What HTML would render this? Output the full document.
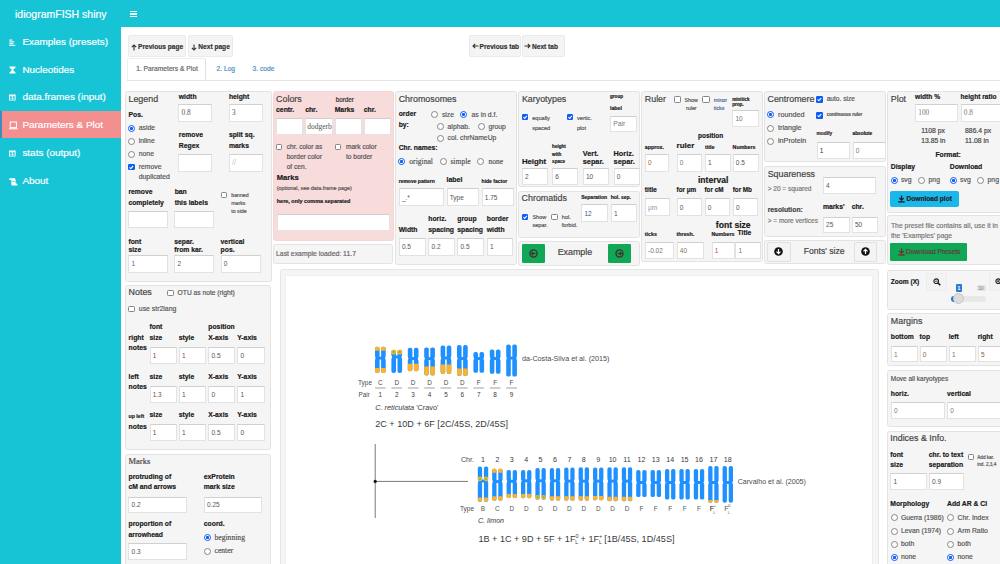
<!DOCTYPE html>
<html><head><meta charset="utf-8"><style>
body{margin:0;width:1000px;height:564px;overflow:hidden;position:relative;background:#fff;font-family:"Liberation Sans",sans-serif}
body>div,body>svg{position:absolute}
.t{position:absolute;height:0;line-height:0;white-space:nowrap;color:#333;-webkit-text-stroke:0.18px currentColor}
.pn{position:absolute;box-sizing:border-box;border:1px solid}
.in{position:absolute;box-sizing:border-box;background:#fff;border:1px solid #e2e2e2;border-top-color:#d0d0d0}
.rd{position:absolute;box-sizing:border-box;border-radius:50%;border:0.9px solid #858585;background:#fff}
.rc{border:1px solid #0c5cf5;background:radial-gradient(circle,#0c5cf5 0,#0c5cf5 38%,#fff 46%)}
.cb{position:absolute;box-sizing:border-box;border:0.9px solid #858585;background:#fff;border-radius:1.3px}
.cc{background:#0c5cf5;border:none}
</style></head><body>
<div style="left:0px;top:0px;width:1000px;height:27px;background:#17c4d6"></div>
<div style="left:0px;top:27px;width:121.3px;height:537px;background:#17c4d6"></div>
<div class="t" style="left:15px;top:14.06px;font-size:10.5px;color:#fff;">idiogramFISH shiny</div>
<div style="left:130.2px;top:10.9px;width:6.6px;height:1.4px;background:#fff"></div>
<div style="left:130.2px;top:13.3px;width:6.6px;height:1.4px;background:#fff"></div>
<div style="left:130.2px;top:15.7px;width:6.6px;height:1.4px;background:#fff"></div>
<div style="left:0px;top:110.6px;width:121.3px;height:27.4px;background:#f48f8f"></div>
<div style="left:0px;top:110.6px;width:1.6px;height:27.4px;background:#3c8dbc"></div>
<div class="t" style="left:22.4px;top:41.95px;font-size:9.95px;color:#fff;">Examples (presets)</div>
<div class="t" style="left:22.4px;top:69.55px;font-size:9.95px;color:#fff;">Nucleotides</div>
<div class="t" style="left:22.4px;top:96.85px;font-size:9.95px;color:#fff;">data.frames (input)</div>
<div class="t" style="left:22.4px;top:125.05px;font-size:9.95px;color:#fff;">Parameters &amp; Plot</div>
<div class="t" style="left:22.4px;top:153.35px;font-size:9.95px;color:#fff;">stats (output)</div>
<div class="t" style="left:22.4px;top:180.95px;font-size:9.95px;color:#fff;">About</div>
<svg style="left:9.4px;top:39.2px" width="8" height="7" viewBox="0 0 8 7"><rect x="0.3" y="0.5" width="3" height="1.1" fill="#fff"/><rect x="0.3" y="2.3" width="5" height="1.1" fill="#fff"/><rect x="0.3" y="4.1" width="4" height="1.1" fill="#fff"/><rect x="0.3" y="5.8" width="6" height="1.1" fill="#fff"/></svg>
<svg style="left:9.2px;top:66.4px" width="7" height="8" viewBox="0 0 7 8"><path d="M0.5 0.5H6.5V1.5L4 4L6.5 6.5V7.5H0.5V6.5L3 4L0.5 1.5Z" fill="#fff"/></svg>
<svg style="left:9.1px;top:94.2px" width="7" height="7" viewBox="0 0 7 7"><rect x="0" y="0.5" width="6.6" height="6" fill="#fff"/><rect x="0.9" y="2.3" width="2" height="1.6" fill="#17c4d6"/><rect x="3.7" y="2.3" width="2" height="1.6" fill="#17c4d6"/><rect x="0.9" y="4.4" width="2" height="1.4" fill="#17c4d6"/><rect x="3.7" y="4.4" width="2" height="1.4" fill="#17c4d6"/></svg>
<svg style="left:9.1px;top:149.8px" width="7" height="7" viewBox="0 0 7 7"><rect x="0" y="0.5" width="6.6" height="6" fill="#fff"/><rect x="0.9" y="2.3" width="2" height="1.6" fill="#17c4d6"/><rect x="3.7" y="2.3" width="2" height="1.6" fill="#17c4d6"/><rect x="0.9" y="4.4" width="2" height="1.4" fill="#17c4d6"/><rect x="3.7" y="4.4" width="2" height="1.4" fill="#17c4d6"/></svg>
<svg style="left:9px;top:120.5px" width="9" height="9" viewBox="0 0 9 9"><rect x="1.2" y="1" width="6.2" height="5.6" fill="none" stroke="#fff" stroke-width="1"/><rect x="0" y="7.2" width="8.6" height="1.1" fill="#fff"/></svg>
<svg style="left:9.4px;top:178.2px" width="9" height="8" viewBox="0 0 9 8"><circle cx="1.1" cy="1.2" r="1" fill="#fff"/><rect x="1.1" y="0.2" width="5" height="1.7" fill="#fff"/><rect x="2.4" y="1.5" width="4.2" height="4.6" fill="#fff"/><rect x="2.4" y="5.4" width="6" height="2.2" rx="0.9" fill="#fff"/><rect x="3.2" y="3" width="2.6" height="0.6" fill="#17c4d6"/></svg>
<div style="left:127.8px;top:35.2px;width:58.6px;height:22px;background:#f4f4f4;border:1px solid #eaeaea;box-sizing:border-box;border-radius:2px"></div>
<div style="left:188.4px;top:35.2px;width:45px;height:22px;background:#f4f4f4;border:1px solid #eaeaea;box-sizing:border-box;border-radius:2px"></div>
<div class="t" style="left:138px;top:47.01px;font-size:6.6px;font-weight:700;">Previous page</div>
<div class="t" style="left:198.3px;top:47.01px;font-size:6.6px;font-weight:700;">Next page</div>
<svg style="left:130.5px;top:43.5px" width="6" height="7" viewBox="0 0 6 7"><path d="M3 6.5V1M0.8 3.2L3 1L5.2 3.2" fill="none" stroke="#333" stroke-width="1.1"/></svg>
<svg style="left:191px;top:43.5px" width="6" height="7" viewBox="0 0 6 7"><path d="M3 0.5V6M0.8 3.8L3 6L5.2 3.8" fill="none" stroke="#333" stroke-width="1.1"/></svg>
<div style="left:468.5px;top:35.2px;width:52px;height:22px;background:#f4f4f4;border:1px solid #eaeaea;box-sizing:border-box;border-radius:2px"></div>
<div style="left:521.5px;top:35.2px;width:43px;height:22px;background:#f4f4f4;border:1px solid #eaeaea;box-sizing:border-box;border-radius:2px"></div>
<div class="t" style="left:479.5px;top:47.01px;font-size:6.6px;font-weight:700;">Previous tab</div>
<div class="t" style="left:532px;top:47.01px;font-size:6.6px;font-weight:700;">Next tab</div>
<svg style="left:471.5px;top:43.3px" width="7" height="6" viewBox="0 0 7 6"><path d="M6.5 3H1M3.2 0.8L1 3L3.2 5.2" fill="none" stroke="#333" stroke-width="1.1"/></svg>
<svg style="left:523.8px;top:43.3px" width="7" height="6" viewBox="0 0 7 6"><path d="M0.5 3H6M3.8 0.8L6 3L3.8 5.2" fill="none" stroke="#333" stroke-width="1.1"/></svg>
<div style="left:127.4px;top:79.6px;width:872.6px;height:0.8px;background:#e6e6e6"></div>
<div style="left:127.4px;top:57.6px;width:78.6px;height:22.9px;background:#fff;border:1px solid #eee;border-right-color:#e0e0e0;border-bottom:none;box-sizing:border-box;border-radius:2px 2px 0 0"></div>
<div class="t" style="left:136.2px;top:68.98px;font-size:6.7px;color:#666;">1. Parameters &amp; Plot</div>
<div class="t" style="left:216.5px;top:68.98px;font-size:6.7px;color:#4a90c8;">2. Log</div>
<div class="t" style="left:252.5px;top:68.98px;font-size:6.7px;color:#4a90c8;">3. code</div>
<div class="pn" style="left:125.3px;top:91px;width:146.5px;height:190.5px;background:#f5f5f5;border-color:#e3e3e3;border-radius:2.5px"></div>
<div class="pn" style="left:125.3px;top:284.5px;width:146.2px;height:165.8px;background:#f5f5f5;border-color:#e3e3e3;border-radius:2.5px"></div>
<div class="pn" style="left:125.3px;top:453.5px;width:146px;height:146.5px;background:#f5f5f5;border-color:#e3e3e3;border-radius:2.5px"></div>
<div class="pn" style="left:273.2px;top:91px;width:120.6px;height:149.5px;background:#f8dbdb;border-color:#f5d6d6;border-radius:2.5px"></div>
<div class="pn" style="left:273.2px;top:244px;width:120.2px;height:20.4px;background:#f5f5f5;border-color:#e3e3e3;border-radius:2.5px"></div>
<div class="pn" style="left:395.4px;top:91px;width:122.1px;height:173.6px;background:#f5f5f5;border-color:#e3e3e3;border-radius:2.5px"></div>
<div class="pn" style="left:518.3px;top:91px;width:121.4px;height:96.1px;background:#f5f5f5;border-color:#e3e3e3;border-radius:2.5px"></div>
<div class="pn" style="left:518.3px;top:190.6px;width:121.4px;height:47.4px;background:#f5f5f5;border-color:#e3e3e3;border-radius:2.5px"></div>
<div class="pn" style="left:518.3px;top:241.2px;width:121.4px;height:24.4px;background:#f5f5f5;border-color:#e3e3e3;border-radius:2.5px"></div>
<div class="pn" style="left:641px;top:91px;width:121.6px;height:170.8px;background:#f5f5f5;border-color:#e3e3e3;border-radius:2.5px"></div>
<div class="pn" style="left:764.3px;top:91px;width:121.3px;height:70.9px;background:#f5f5f5;border-color:#e3e3e3;border-radius:2.5px"></div>
<div class="pn" style="left:764.3px;top:165.7px;width:121.3px;height:71.1px;background:#f5f5f5;border-color:#e3e3e3;border-radius:2.5px"></div>
<div class="pn" style="left:764.3px;top:240.1px;width:121.3px;height:24.3px;background:#f5f5f5;border-color:#e3e3e3;border-radius:2.5px"></div>
<div class="pn" style="left:887px;top:91px;width:123px;height:121.5px;background:#f5f5f5;border-color:#e3e3e3;border-radius:2.5px"></div>
<div class="pn" style="left:887px;top:215.2px;width:123px;height:49.6px;background:#f5f5f5;border-color:#e3e3e3;border-radius:2.5px"></div>
<div class="pn" style="left:887px;top:270.4px;width:123px;height:39.9px;background:#f5f5f5;border-color:#e3e3e3;border-radius:2.5px"></div>
<div class="pn" style="left:887px;top:313.4px;width:123px;height:52.7px;background:#f5f5f5;border-color:#e3e3e3;border-radius:2.5px"></div>
<div class="pn" style="left:887px;top:369.7px;width:123px;height:57.5px;background:#f5f5f5;border-color:#e3e3e3;border-radius:2.5px"></div>
<div class="pn" style="left:887px;top:431px;width:123px;height:169px;background:#f5f5f5;border-color:#e3e3e3;border-radius:2.5px"></div>
<div style="left:280.2px;top:269.2px;width:598.6px;height:330.8px;background:#f5f5f5;border:1px solid #e6e6e6;box-sizing:border-box;border-radius:2.5px"></div>
<div style="left:285.4px;top:274.5px;width:587.8px;height:325.5px;background:#fff;border:1px solid #efefef;box-sizing:border-box"></div>
<div class="t" style="left:128.5px;top:98.82px;font-size:8.9px;color:#444;">Legend</div>
<div class="t" style="left:178.8px;top:96.74px;font-size:6.8px;font-weight:700;color:#1a1a1a;">width</div>
<div class="t" style="left:228.9px;top:96.74px;font-size:6.8px;font-weight:700;color:#1a1a1a;">height</div>
<div class="in" style="left:178.3px;top:104.3px;width:34.2px;height:18px"></div>
<div class="t" style="left:181.5px;top:113.47px;font-size:7.31px;color:#555;font-family:'Liberation Serif';-webkit-text-stroke:0;">0.8</div>
<div class="in" style="left:228.9px;top:104.3px;width:33.7px;height:18px"></div>
<div class="t" style="left:232.1px;top:113.47px;font-size:7.31px;color:#555;font-family:'Liberation Serif';-webkit-text-stroke:0;">3</div>
<div class="t" style="left:128.5px;top:114.64px;font-size:6.8px;font-weight:700;color:#1a1a1a;">Pos.</div>
<div class="rd rc" style="left:128.1px;top:124.5px;width:7px;height:7px"></div>
<div class="t" style="left:138.8px;top:128.04px;font-size:6.8px;color:#555;">aside</div>
<div class="rd" style="left:128.1px;top:137.5px;width:7px;height:7px"></div>
<div class="t" style="left:138.8px;top:141.04px;font-size:6.8px;color:#555;">inline</div>
<div class="rd" style="left:128.1px;top:150.9px;width:7px;height:7px"></div>
<div class="t" style="left:138.8px;top:154.44px;font-size:6.8px;color:#555;">none</div>
<div class="cb cc" style="left:128.3px;top:163.55px;width:6.5px;height:6.5px"><svg viewBox="0 0 10 10" width="6.5" height="6.5" style="position:absolute;left:0;top:0"><path d="M2.3 5.1 L4.3 7.1 L7.9 3" fill="none" stroke="#fff" stroke-width="1.7"/></svg></div>
<div class="t" style="left:138.8px;top:166.84px;font-size:6.8px;color:#555;">remove</div>
<div class="t" style="left:138.8px;top:177.04px;font-size:6.8px;color:#555;">duplicated</div>
<div class="t" style="left:178.8px;top:135.44px;font-size:6.8px;font-weight:700;color:#1a1a1a;">remove</div>
<div class="t" style="left:178.8px;top:146.04px;font-size:6.8px;font-weight:700;color:#1a1a1a;">Regex</div>
<div class="t" style="left:228.9px;top:135.44px;font-size:6.8px;font-weight:700;color:#1a1a1a;">split sq.</div>
<div class="t" style="left:228.9px;top:146.04px;font-size:6.8px;font-weight:700;color:#1a1a1a;">marks</div>
<div class="in" style="left:178.3px;top:154px;width:34.2px;height:18px"></div>
<div class="in" style="left:228.9px;top:154px;width:33.7px;height:18px"></div>
<div class="t" style="left:232.1px;top:163.17px;font-size:7.31px;color:#999;font-family:'Liberation Serif';-webkit-text-stroke:0;">//</div>
<div class="t" style="left:128.4px;top:192.14px;font-size:6.8px;font-weight:700;color:#1a1a1a;">remove</div>
<div class="t" style="left:128.4px;top:202.54px;font-size:6.8px;font-weight:700;color:#1a1a1a;">completely</div>
<div class="t" style="left:174.7px;top:192.14px;font-size:6.8px;font-weight:700;color:#1a1a1a;">ban</div>
<div class="t" style="left:174.7px;top:202.54px;font-size:6.8px;font-weight:700;color:#1a1a1a;">this labels</div>
<div class="cb" style="left:220.6px;top:192px;width:6px;height:6px"></div>
<div class="t" style="left:231.3px;top:195.2px;font-size:5.2px;color:#555;">banned</div>
<div class="t" style="left:231.3px;top:202.9px;font-size:5.2px;color:#555;">marks</div>
<div class="t" style="left:231.3px;top:210.7px;font-size:5.2px;color:#555;">to side</div>
<div class="in" style="left:128.4px;top:210.5px;width:39.9px;height:17.6px"></div>
<div class="in" style="left:174.3px;top:210.5px;width:40px;height:17.6px"></div>
<div class="t" style="left:128.4px;top:241.94px;font-size:6.8px;font-weight:700;color:#1a1a1a;">font</div>
<div class="t" style="left:128.4px;top:249.74px;font-size:6.8px;font-weight:700;color:#1a1a1a;">size</div>
<div class="t" style="left:174.3px;top:241.94px;font-size:6.8px;font-weight:700;color:#1a1a1a;">separ.</div>
<div class="t" style="left:174.3px;top:249.74px;font-size:6.8px;font-weight:700;color:#1a1a1a;">from kar.</div>
<div class="t" style="left:220.6px;top:241.94px;font-size:6.8px;font-weight:700;color:#1a1a1a;">vertical</div>
<div class="t" style="left:220.6px;top:249.74px;font-size:6.8px;font-weight:700;color:#1a1a1a;">pos.</div>
<div class="in" style="left:128.4px;top:255.4px;width:39.9px;height:17.2px"></div>
<div class="t" style="left:131.6px;top:264.44px;font-size:6.53px;color:#3c6ea8;-webkit-text-stroke:0;">1</div>
<div class="in" style="left:174.3px;top:255.4px;width:40px;height:17.2px"></div>
<div class="t" style="left:177.5px;top:264.44px;font-size:6.53px;color:#555;-webkit-text-stroke:0;">2</div>
<div class="in" style="left:220.6px;top:255.4px;width:40.2px;height:17.2px"></div>
<div class="t" style="left:223.8px;top:264.44px;font-size:6.53px;color:#555;-webkit-text-stroke:0;">0</div>
<div class="t" style="left:128.6px;top:292.12px;font-size:8.9px;color:#444;">Notes</div>
<div class="cb" style="left:167.2px;top:289.95px;width:6.5px;height:6.5px"></div>
<div class="t" style="left:177.6px;top:293.08px;font-size:6.7px;color:#555;">OTU as note (right)</div>
<div class="cb" style="left:128.2px;top:305.65px;width:6.5px;height:6.5px"></div>
<div class="t" style="left:138.8px;top:308.61px;font-size:6.9px;color:#555;">use str2lang</div>
<div class="t" style="left:149.5px;top:326.94px;font-size:6.8px;font-weight:700;color:#1a1a1a;">font</div>
<div class="t" style="left:208.3px;top:326.94px;font-size:6.8px;font-weight:700;color:#1a1a1a;">position</div>
<div class="t" style="left:128.6px;top:337.54px;font-size:6.8px;font-weight:700;color:#1a1a1a;">right</div>
<div class="t" style="left:128.6px;top:348.14px;font-size:6.8px;font-weight:700;color:#1a1a1a;">notes</div>
<div class="t" style="left:149.5px;top:337.54px;font-size:6.8px;font-weight:700;color:#1a1a1a;">size</div>
<div class="in" style="left:149.5px;top:346.5px;width:27.8px;height:17.2px"></div>
<div class="t" style="left:152.7px;top:355.54px;font-size:6.53px;color:#8b4a3a;-webkit-text-stroke:0;">1</div>
<div class="t" style="left:178.7px;top:337.54px;font-size:6.8px;font-weight:700;color:#1a1a1a;">style</div>
<div class="in" style="left:178.7px;top:346.5px;width:27.5px;height:17.2px"></div>
<div class="t" style="left:181.9px;top:355.54px;font-size:6.53px;color:#8b4a3a;-webkit-text-stroke:0;">1</div>
<div class="t" style="left:208.3px;top:337.54px;font-size:6.8px;font-weight:700;color:#1a1a1a;">X-axis</div>
<div class="in" style="left:208.3px;top:346.5px;width:26.9px;height:17.2px"></div>
<div class="t" style="left:211.5px;top:355.54px;font-size:6.53px;color:#555;-webkit-text-stroke:0;">0.5</div>
<div class="t" style="left:237.2px;top:337.54px;font-size:6.8px;font-weight:700;color:#1a1a1a;">Y-axis</div>
<div class="in" style="left:237.2px;top:346.5px;width:27.5px;height:17.2px"></div>
<div class="t" style="left:240.4px;top:355.54px;font-size:6.53px;color:#555;-webkit-text-stroke:0;">0</div>
<div class="t" style="left:149.5px;top:376.54px;font-size:6.8px;font-weight:700;color:#1a1a1a;">size</div>
<div class="in" style="left:149.5px;top:385.5px;width:27.8px;height:17.2px"></div>
<div class="t" style="left:152.7px;top:394.54px;font-size:6.53px;color:#8b4a3a;-webkit-text-stroke:0;">1.3</div>
<div class="t" style="left:178.7px;top:376.54px;font-size:6.8px;font-weight:700;color:#1a1a1a;">style</div>
<div class="in" style="left:178.7px;top:385.5px;width:27.5px;height:17.2px"></div>
<div class="t" style="left:181.9px;top:394.54px;font-size:6.53px;color:#555;-webkit-text-stroke:0;">1</div>
<div class="t" style="left:208.3px;top:376.54px;font-size:6.8px;font-weight:700;color:#1a1a1a;">X-axis</div>
<div class="in" style="left:208.3px;top:385.5px;width:26.9px;height:17.2px"></div>
<div class="t" style="left:211.5px;top:394.54px;font-size:6.53px;color:#555;-webkit-text-stroke:0;">0</div>
<div class="t" style="left:237.2px;top:376.54px;font-size:6.8px;font-weight:700;color:#1a1a1a;">Y-axis</div>
<div class="in" style="left:237.2px;top:385.5px;width:27.5px;height:17.2px"></div>
<div class="t" style="left:240.4px;top:394.54px;font-size:6.53px;color:#555;-webkit-text-stroke:0;">1</div>
<div class="t" style="left:128.6px;top:376.54px;font-size:6.8px;font-weight:700;color:#1a1a1a;">left</div>
<div class="t" style="left:128.6px;top:387.14px;font-size:6.8px;font-weight:700;color:#1a1a1a;">notes</div>
<div class="t" style="left:149.5px;top:415.14px;font-size:6.8px;font-weight:700;color:#1a1a1a;">size</div>
<div class="in" style="left:149.5px;top:424.3px;width:27.8px;height:17.2px"></div>
<div class="t" style="left:152.7px;top:433.34px;font-size:6.53px;color:#8b4a3a;-webkit-text-stroke:0;">1</div>
<div class="t" style="left:178.7px;top:415.14px;font-size:6.8px;font-weight:700;color:#1a1a1a;">style</div>
<div class="in" style="left:178.7px;top:424.3px;width:27.5px;height:17.2px"></div>
<div class="t" style="left:181.9px;top:433.34px;font-size:6.53px;color:#555;-webkit-text-stroke:0;">1</div>
<div class="t" style="left:208.3px;top:415.14px;font-size:6.8px;font-weight:700;color:#1a1a1a;">X-axis</div>
<div class="in" style="left:208.3px;top:424.3px;width:26.9px;height:17.2px"></div>
<div class="t" style="left:211.5px;top:433.34px;font-size:6.53px;color:#555;-webkit-text-stroke:0;">0.5</div>
<div class="t" style="left:237.2px;top:415.14px;font-size:6.8px;font-weight:700;color:#1a1a1a;">Y-axis</div>
<div class="in" style="left:237.2px;top:424.3px;width:27.5px;height:17.2px"></div>
<div class="t" style="left:240.4px;top:433.34px;font-size:6.53px;color:#555;-webkit-text-stroke:0;">0</div>
<div class="t" style="left:128.6px;top:415.7px;font-size:5.2px;font-weight:700;color:#1a1a1a;">up left</div>
<div class="t" style="left:128.6px;top:426.64px;font-size:6.8px;font-weight:700;color:#1a1a1a;">notes</div>
<div class="t" style="left:128.5px;top:461.15px;font-size:8.51px;color:#444;font-family:'Liberation Serif';">Marks</div>
<div class="t" style="left:128.5px;top:476.94px;font-size:6.8px;font-weight:700;color:#1a1a1a;">protruding of</div>
<div class="t" style="left:128.5px;top:487.44px;font-size:6.8px;font-weight:700;color:#1a1a1a;">cM and arrows</div>
<div class="t" style="left:203.8px;top:476.94px;font-size:6.8px;font-weight:700;color:#1a1a1a;">exProtein</div>
<div class="t" style="left:203.8px;top:487.44px;font-size:6.8px;font-weight:700;color:#1a1a1a;">mark size</div>
<div class="in" style="left:128.4px;top:496.5px;width:58.6px;height:16.5px"></div>
<div class="t" style="left:131.6px;top:505.19px;font-size:6.53px;color:#555;-webkit-text-stroke:0;">0.2</div>
<div class="in" style="left:203.8px;top:496.5px;width:58.6px;height:16.5px"></div>
<div class="t" style="left:207px;top:505.19px;font-size:6.53px;color:#555;-webkit-text-stroke:0;">0.25</div>
<div class="t" style="left:128.5px;top:524.04px;font-size:6.8px;font-weight:700;color:#1a1a1a;">proportion of</div>
<div class="t" style="left:128.5px;top:534.54px;font-size:6.8px;font-weight:700;color:#1a1a1a;">arrowhead</div>
<div class="t" style="left:203.8px;top:524.04px;font-size:6.8px;font-weight:700;color:#1a1a1a;">coord.</div>
<div class="rd rc" style="left:203.5px;top:534.4px;width:7px;height:7px"></div>
<div class="t" style="left:214.5px;top:537.66px;font-size:7.62px;color:#555;font-family:'Liberation Serif';">beginning</div>
<div class="rd" style="left:203.5px;top:547.5px;width:7px;height:7px"></div>
<div class="t" style="left:214.5px;top:550.76px;font-size:7.62px;color:#555;font-family:'Liberation Serif';">center</div>
<div class="in" style="left:128.4px;top:543px;width:58.6px;height:17.1px"></div>
<div class="t" style="left:131.6px;top:551.99px;font-size:6.53px;color:#555;-webkit-text-stroke:0;">0.3</div>
<div class="t" style="left:276.1px;top:98.72px;font-size:8.9px;color:#444;">Colors</div>
<div class="t" style="left:335.7px;top:100.32px;font-size:6.3px;">border</div>
<div class="t" style="left:276.1px;top:109.64px;font-size:6.8px;font-weight:700;color:#1a1a1a;">centr.</div>
<div class="t" style="left:305.2px;top:109.64px;font-size:6.8px;font-weight:700;color:#1a1a1a;">chr.</div>
<div class="t" style="left:334.7px;top:109.64px;font-size:6.8px;font-weight:700;color:#1a1a1a;">Marks</div>
<div class="t" style="left:363.8px;top:109.64px;font-size:6.8px;font-weight:700;color:#1a1a1a;">chr.</div>
<div class="in" style="left:276px;top:117.8px;width:27.4px;height:17.5px"></div>
<div class="in" style="left:305px;top:117.8px;width:27.5px;height:17.5px"></div>
<div class="t" style="left:307.2px;top:126.64px;font-size:7.53px;color:#555;font-family:'Liberation Serif';-webkit-text-stroke:0;">dodgerb</div>
<div class="in" style="left:334.7px;top:117.8px;width:26.9px;height:17.5px"></div>
<div class="in" style="left:363.8px;top:117.8px;width:26.9px;height:17.5px"></div>
<div class="cb" style="left:276px;top:143.75px;width:6.3px;height:6.3px"></div>
<div class="t" style="left:286.7px;top:146.51px;font-size:6.6px;color:#555;">chr. color as</div>
<div class="t" style="left:286.7px;top:157.01px;font-size:6.6px;color:#555;">border color</div>
<div class="t" style="left:286.7px;top:167.01px;font-size:6.6px;color:#555;">of cen.</div>
<div class="cb" style="left:335.1px;top:143.75px;width:6.3px;height:6.3px"></div>
<div class="t" style="left:345.9px;top:146.51px;font-size:6.6px;color:#555;">mark color</div>
<div class="t" style="left:345.9px;top:157.01px;font-size:6.6px;color:#555;">to border</div>
<div class="t" style="left:276.8px;top:177.67px;font-size:7.6px;font-weight:700;color:#1a1a1a;">Marks</div>
<div class="t" style="left:276.8px;top:187.53px;font-size:5.4px;color:#555;">(optional, see data.frame page)</div>
<div class="t" style="left:276.8px;top:201.01px;font-size:5.45px;font-weight:700;color:#1a1a1a;">here, only comma separated</div>
<div class="in" style="left:276.8px;top:213.5px;width:112.9px;height:17.6px"></div>
<div class="t" style="left:276px;top:254.02px;font-size:6.86px;color:#666;">Last example loaded: 11.7</div>
<div class="t" style="left:398.7px;top:98.82px;font-size:8.9px;color:#444;">Chromosomes</div>
<div class="t" style="left:398.7px;top:114.14px;font-size:6.8px;font-weight:700;color:#1a1a1a;">order</div>
<div class="t" style="left:398.7px;top:125.14px;font-size:6.8px;font-weight:700;color:#1a1a1a;">by:</div>
<div class="rd" style="left:431.2px;top:111.1px;width:7px;height:7px"></div>
<div class="t" style="left:441.9px;top:114.64px;font-size:6.8px;color:#555;">size</div>
<div class="rd rc" style="left:460.3px;top:111.1px;width:7px;height:7px"></div>
<div class="t" style="left:471.6px;top:114.64px;font-size:6.8px;color:#555;">as in d.f.</div>
<div class="rd" style="left:436.9px;top:123.1px;width:7px;height:7px"></div>
<div class="t" style="left:447.6px;top:126.64px;font-size:6.8px;color:#555;">alphab.</div>
<div class="rd" style="left:477.7px;top:123.1px;width:7px;height:7px"></div>
<div class="t" style="left:488.4px;top:126.64px;font-size:6.8px;color:#555;">group</div>
<div class="rd" style="left:436.9px;top:134.5px;width:7px;height:7px"></div>
<div class="t" style="left:447.6px;top:138.04px;font-size:6.8px;color:#555;">col. chrNameUp</div>
<div class="t" style="left:398.7px;top:148.44px;font-size:6.8px;font-weight:700;color:#1a1a1a;">Chr. names:</div>
<div class="rd rc" style="left:398px;top:158.4px;width:7px;height:7px"></div>
<div class="t" style="left:409.3px;top:161.66px;font-size:7.62px;color:#555;font-family:'Liberation Serif';">original</div>
<div class="rd" style="left:439.9px;top:158.4px;width:7px;height:7px"></div>
<div class="t" style="left:450.4px;top:161.66px;font-size:7.62px;color:#555;font-family:'Liberation Serif';">simple</div>
<div class="rd" style="left:477.4px;top:158.4px;width:7px;height:7px"></div>
<div class="t" style="left:488.4px;top:161.66px;font-size:7.62px;color:#555;font-family:'Liberation Serif';">none</div>
<div class="t" style="left:398.7px;top:180.77px;font-size:5px;font-weight:700;color:#1a1a1a;">remove pattern</div>
<div class="t" style="left:446.5px;top:180.07px;font-size:7px;font-weight:700;color:#1a1a1a;">label</div>
<div class="t" style="left:481.6px;top:180.77px;font-size:5px;font-weight:700;color:#1a1a1a;">hide factor</div>
<div class="in" style="left:398.7px;top:188.2px;width:45.6px;height:17.9px"></div>
<div class="t" style="left:401.9px;top:197.59px;font-size:6.53px;color:#555;-webkit-text-stroke:0;">_.*</div>
<div class="in" style="left:446.5px;top:188.2px;width:32.8px;height:17.9px"></div>
<div class="t" style="left:449.7px;top:197.59px;font-size:6.53px;color:#555;-webkit-text-stroke:0;">Type</div>
<div class="in" style="left:481.6px;top:188.2px;width:32.7px;height:17.9px"></div>
<div class="t" style="left:484.8px;top:197.59px;font-size:6.53px;color:#555;-webkit-text-stroke:0;">1.75</div>
<div class="t" style="left:428.3px;top:219.44px;font-size:6.8px;font-weight:700;color:#1a1a1a;">horiz.</div>
<div class="t" style="left:428.3px;top:229.84px;font-size:6.8px;font-weight:700;color:#1a1a1a;">spacing</div>
<div class="t" style="left:398.7px;top:229.84px;font-size:6.8px;font-weight:700;color:#1a1a1a;">Width</div>
<div class="t" style="left:457.3px;top:219.44px;font-size:6.8px;font-weight:700;color:#1a1a1a;">group</div>
<div class="t" style="left:457.3px;top:229.84px;font-size:6.8px;font-weight:700;color:#1a1a1a;">spacing</div>
<div class="t" style="left:486.8px;top:219.44px;font-size:6.8px;font-weight:700;color:#1a1a1a;">border</div>
<div class="t" style="left:486.8px;top:229.84px;font-size:6.8px;font-weight:700;color:#1a1a1a;">width</div>
<div class="in" style="left:398.7px;top:238.1px;width:27.3px;height:17.9px"></div>
<div class="t" style="left:401.9px;top:247.49px;font-size:6.53px;color:#555;-webkit-text-stroke:0;">0.5</div>
<div class="in" style="left:428.3px;top:238.1px;width:26.7px;height:17.9px"></div>
<div class="t" style="left:431.5px;top:247.49px;font-size:6.53px;color:#555;-webkit-text-stroke:0;">0.2</div>
<div class="in" style="left:457.3px;top:238.1px;width:26.6px;height:17.9px"></div>
<div class="t" style="left:460.5px;top:247.49px;font-size:6.53px;color:#555;-webkit-text-stroke:0;">0.5</div>
<div class="in" style="left:486.8px;top:238.1px;width:26.6px;height:17.9px"></div>
<div class="t" style="left:490px;top:247.49px;font-size:6.53px;color:#555;-webkit-text-stroke:0;">1</div>
<div class="t" style="left:521.9px;top:99.42px;font-size:8.9px;color:#444;">Karyotypes</div>
<div class="t" style="left:610px;top:97.31px;font-size:4.6px;font-weight:700;color:#1a1a1a;">group</div>
<div class="t" style="left:610px;top:107.5px;font-size:5.2px;font-weight:700;color:#1a1a1a;">label</div>
<div class="cb cc" style="left:521.9px;top:114.2px;width:6.2px;height:6.2px"><svg viewBox="0 0 10 10" width="6.2" height="6.2" style="position:absolute;left:0;top:0"><path d="M2.3 5.1 L4.3 7.1 L7.9 3" fill="none" stroke="#fff" stroke-width="1.7"/></svg></div>
<div class="t" style="left:532.2px;top:117.76px;font-size:5.6px;color:#555;">equally</div>
<div class="t" style="left:532.2px;top:128.06px;font-size:5.6px;color:#555;">spaced</div>
<div class="cb cc" style="left:567.1px;top:114.2px;width:6.2px;height:6.2px"><svg viewBox="0 0 10 10" width="6.2" height="6.2" style="position:absolute;left:0;top:0"><path d="M2.3 5.1 L4.3 7.1 L7.9 3" fill="none" stroke="#fff" stroke-width="1.7"/></svg></div>
<div class="t" style="left:577px;top:117.76px;font-size:5.6px;color:#555;">vertic.</div>
<div class="t" style="left:577px;top:128.06px;font-size:5.6px;color:#555;">plot</div>
<div class="in" style="left:610px;top:115.5px;width:27.1px;height:16.8px"></div>
<div class="t" style="left:613.2px;top:124.27px;font-size:6.72px;color:#777;-webkit-text-stroke:0;">Pair</div>
<div class="t" style="left:521.9px;top:161.6px;font-size:7.8px;font-weight:700;color:#1a1a1a;">Height</div>
<div class="t" style="left:552.1px;top:147.01px;font-size:4.6px;font-weight:700;color:#1a1a1a;">height</div>
<div class="t" style="left:552.1px;top:154.81px;font-size:4.6px;font-weight:700;color:#1a1a1a;">with</div>
<div class="t" style="left:552.1px;top:162.41px;font-size:4.6px;font-weight:700;color:#1a1a1a;">space</div>
<div class="t" style="left:582.8px;top:153.87px;font-size:7.3px;font-weight:700;color:#1a1a1a;">Vert.</div>
<div class="t" style="left:582.8px;top:161.77px;font-size:7.3px;font-weight:700;color:#1a1a1a;">separ.</div>
<div class="t" style="left:613.6px;top:153.87px;font-size:7.3px;font-weight:700;color:#1a1a1a;">Horiz.</div>
<div class="t" style="left:613.6px;top:161.77px;font-size:7.3px;font-weight:700;color:#1a1a1a;">separ.</div>
<div class="in" style="left:521.9px;top:167.6px;width:25.7px;height:17.2px"></div>
<div class="t" style="left:525.1px;top:176.64px;font-size:6.53px;color:#555;-webkit-text-stroke:0;">2</div>
<div class="in" style="left:552.1px;top:167.6px;width:26.2px;height:17.2px"></div>
<div class="t" style="left:555.3px;top:176.64px;font-size:6.53px;color:#555;-webkit-text-stroke:0;">6</div>
<div class="in" style="left:582.8px;top:167.6px;width:26.2px;height:17.2px"></div>
<div class="t" style="left:586px;top:176.64px;font-size:6.53px;color:#555;-webkit-text-stroke:0;">10</div>
<div class="in" style="left:613.6px;top:167.6px;width:26.4px;height:17.2px"></div>
<div class="t" style="left:616.8px;top:176.64px;font-size:6.53px;color:#555;-webkit-text-stroke:0;">0</div>
<div class="t" style="left:521.6px;top:198.42px;font-size:8.9px;color:#444;">Chromatids</div>
<div class="t" style="left:581.2px;top:196.77px;font-size:5px;font-weight:700;color:#1a1a1a;">Separation</div>
<div class="t" style="left:610.7px;top:196.77px;font-size:5px;font-weight:700;color:#1a1a1a;">hol. sep.</div>
<div class="in" style="left:581.2px;top:204.4px;width:26.5px;height:17.4px"></div>
<div class="t" style="left:584.4px;top:213.54px;font-size:6.53px;color:#3c5a8a;-webkit-text-stroke:0;">12</div>
<div class="in" style="left:610.7px;top:204.4px;width:26.4px;height:17.4px"></div>
<div class="t" style="left:613.9px;top:213.54px;font-size:6.53px;color:#3c5a8a;-webkit-text-stroke:0;">1</div>
<div class="cb cc" style="left:522px;top:214px;width:6.2px;height:6.2px"><svg viewBox="0 0 10 10" width="6.2" height="6.2" style="position:absolute;left:0;top:0"><path d="M2.3 5.1 L4.3 7.1 L7.9 3" fill="none" stroke="#fff" stroke-width="1.7"/></svg></div>
<div class="t" style="left:532.4px;top:216.86px;font-size:5.6px;color:#555;">Show</div>
<div class="t" style="left:532.4px;top:225.06px;font-size:5.6px;color:#555;">separ.</div>
<div class="cb" style="left:551px;top:213.85px;width:6.5px;height:6.5px"></div>
<div class="t" style="left:561.8px;top:216.86px;font-size:5.6px;color:#555;">hol.</div>
<div class="t" style="left:561.8px;top:225.06px;font-size:5.6px;color:#555;">forbid.</div>
<div style="left:522px;top:244.2px;width:23.2px;height:18.5px;background:#10a757;border-radius:1.2px"></div>
<div style="left:608px;top:244.2px;width:23.3px;height:18.5px;background:#10a757;border-radius:1.2px"></div>
<svg style="left:528.5px;top:248.5px" width="9" height="9" viewBox="0 0 9 9"><circle cx="4.5" cy="4.5" r="3.6" fill="none" stroke="#4a2a30" stroke-width="1.3"/><path d="M6.6 4.5H2.6M4.3 2.8L2.6 4.5L4.3 6.2" fill="none" stroke="#4a2a30" stroke-width="1.2"/></svg>
<svg style="left:615px;top:248.5px" width="9" height="9" viewBox="0 0 9 9"><circle cx="4.5" cy="4.5" r="3.6" fill="none" stroke="#4a2a30" stroke-width="1.3"/><path d="M2.4 4.5H6.4M4.7 2.8L6.4 4.5L4.7 6.2" fill="none" stroke="#4a2a30" stroke-width="1.2"/></svg>
<div class="t" style="left:557.7px;top:251.82px;font-size:8.9px;color:#444;">Example</div>
<div class="t" style="left:644.8px;top:98.82px;font-size:8.9px;color:#444;">Ruler</div>
<div class="cb" style="left:673.5px;top:95.8px;width:7.2px;height:7.2px"></div>
<div class="t" style="left:684.5px;top:99.56px;font-size:5.3px;color:#555;">Show</div>
<div class="t" style="left:686px;top:107.66px;font-size:5.3px;color:#555;">ruler</div>
<div class="cb" style="left:702.4px;top:95.8px;width:7.2px;height:7.2px"></div>
<div class="t" style="left:713.8px;top:99.56px;font-size:5.3px;color:#4a6a9a;">minor</div>
<div class="t" style="left:713.8px;top:107.66px;font-size:5.3px;color:#4a6a9a;">ticks</div>
<div class="t" style="left:732.2px;top:99.81px;font-size:4.6px;font-weight:700;color:#1a1a1a;">minitick</div>
<div class="t" style="left:732.2px;top:105.21px;font-size:4.6px;font-weight:700;color:#1a1a1a;">prop.</div>
<div class="in" style="left:732.2px;top:110px;width:27.3px;height:17.1px"></div>
<div class="t" style="left:735.4px;top:118.99px;font-size:6.53px;color:#777;-webkit-text-stroke:0;">10</div>
<div class="t" style="left:698px;top:136.15px;font-size:6.5px;font-weight:700;color:#1a1a1a;">position</div>
<div class="t" style="left:644.8px;top:146.86px;font-size:5.3px;font-weight:700;color:#1a1a1a;">approx.</div>
<div class="t" style="left:676.6px;top:145.93px;font-size:8px;font-weight:700;color:#1a1a1a;">ruler</div>
<div class="t" style="left:704.9px;top:146.79px;font-size:5.5px;font-weight:700;color:#1a1a1a;">title</div>
<div class="t" style="left:732.6px;top:146.86px;font-size:5.3px;font-weight:700;color:#1a1a1a;">Numbers</div>
<div class="in" style="left:644.8px;top:154px;width:24.7px;height:18px"></div>
<div class="t" style="left:648px;top:163.44px;font-size:6.53px;color:#b5651d;-webkit-text-stroke:0;">0</div>
<div class="in" style="left:676.6px;top:154px;width:25.5px;height:18px"></div>
<div class="t" style="left:679.8px;top:163.44px;font-size:6.53px;color:#777;-webkit-text-stroke:0;">0</div>
<div class="in" style="left:704.9px;top:154px;width:25.7px;height:18px"></div>
<div class="t" style="left:708.1px;top:163.44px;font-size:6.53px;color:#555;-webkit-text-stroke:0;">1</div>
<div class="in" style="left:732.6px;top:154px;width:26.1px;height:18px"></div>
<div class="t" style="left:735.8px;top:163.44px;font-size:6.53px;color:#555;-webkit-text-stroke:0;">0.5</div>
<div class="t" style="left:697.9px;top:179.52px;font-size:8.6px;font-weight:700;color:#1a1a1a;">interval</div>
<div class="t" style="left:644.8px;top:190.24px;font-size:6.8px;font-weight:700;color:#1a1a1a;">title</div>
<div class="t" style="left:676.6px;top:190.42px;font-size:6.3px;font-weight:700;color:#1a1a1a;">for μm</div>
<div class="t" style="left:704.5px;top:190.42px;font-size:6.3px;font-weight:700;color:#1a1a1a;">for cM</div>
<div class="t" style="left:732.7px;top:190.42px;font-size:6.3px;font-weight:700;color:#1a1a1a;">for Mb</div>
<div class="in" style="left:644.8px;top:198.3px;width:24.8px;height:17.7px"></div>
<div class="t" style="left:648px;top:207.59px;font-size:6.53px;color:#8899bb;-webkit-text-stroke:0;">μm</div>
<div class="in" style="left:676.6px;top:198.3px;width:25.7px;height:17.7px"></div>
<div class="t" style="left:679.8px;top:207.59px;font-size:6.53px;color:#555;-webkit-text-stroke:0;">0</div>
<div class="in" style="left:704.5px;top:198.3px;width:25.9px;height:17.7px"></div>
<div class="t" style="left:707.7px;top:207.59px;font-size:6.53px;color:#555;-webkit-text-stroke:0;">0</div>
<div class="in" style="left:732.7px;top:198.3px;width:25.7px;height:17.7px"></div>
<div class="t" style="left:735.9px;top:207.59px;font-size:6.53px;color:#555;-webkit-text-stroke:0;">0</div>
<div class="t" style="left:715.8px;top:224.72px;font-size:8.6px;font-weight:700;color:#1a1a1a;">font size</div>
<div class="t" style="left:644.8px;top:233.76px;font-size:5.3px;font-weight:700;color:#1a1a1a;">ticks</div>
<div class="t" style="left:676.6px;top:233.76px;font-size:5.3px;font-weight:700;color:#1a1a1a;">thresh.</div>
<div class="t" style="left:711.5px;top:233.76px;font-size:5.3px;font-weight:700;color:#1a1a1a;">Numbers</div>
<div class="t" style="left:737.5px;top:233.24px;font-size:6.8px;font-weight:700;color:#1a1a1a;">Title</div>
<div class="in" style="left:644.8px;top:241.6px;width:29.3px;height:17px"></div>
<div class="t" style="left:648px;top:250.54px;font-size:6.53px;color:#777;-webkit-text-stroke:0;">-0.02</div>
<div class="in" style="left:676.6px;top:241.6px;width:27px;height:17px"></div>
<div class="t" style="left:679.8px;top:250.54px;font-size:6.53px;color:#8a7a4a;-webkit-text-stroke:0;">40</div>
<div class="in" style="left:711.5px;top:241.6px;width:23.8px;height:17px"></div>
<div class="t" style="left:714.7px;top:250.54px;font-size:6.53px;color:#c05050;-webkit-text-stroke:0;">1</div>
<div class="in" style="left:735.3px;top:241.6px;width:26px;height:17px"></div>
<div class="t" style="left:738.5px;top:250.54px;font-size:6.53px;color:#777;-webkit-text-stroke:0;">1</div>
<div class="t" style="left:767.5px;top:99.02px;font-size:8.9px;color:#444;">Centromere</div>
<div class="cb cc" style="left:816.1px;top:95.95px;width:6.7px;height:6.7px"><svg viewBox="0 0 10 10" width="6.7" height="6.7" style="position:absolute;left:0;top:0"><path d="M2.3 5.1 L4.3 7.1 L7.9 3" fill="none" stroke="#fff" stroke-width="1.7"/></svg></div>
<div class="t" style="left:826.7px;top:99.11px;font-size:6.6px;color:#555;">auto. size</div>
<div class="cb cc" style="left:816.1px;top:111.95px;width:6.7px;height:6.7px"><svg viewBox="0 0 10 10" width="6.7" height="6.7" style="position:absolute;left:0;top:0"><path d="M2.3 5.1 L4.3 7.1 L7.9 3" fill="none" stroke="#fff" stroke-width="1.7"/></svg></div>
<div class="t" style="left:826.7px;top:115.44px;font-size:4.5px;font-weight:700;color:#555;">continuous ruler</div>
<div class="rd rc" style="left:767.2px;top:111.4px;width:7px;height:7px"></div>
<div class="t" style="left:778px;top:114.61px;font-size:7.2px;color:#555;">rounded</div>
<div class="rd" style="left:767.2px;top:124.8px;width:7px;height:7px"></div>
<div class="t" style="left:778px;top:128.01px;font-size:7.2px;color:#555;">triangle</div>
<div class="rd" style="left:767.2px;top:137.9px;width:7px;height:7px"></div>
<div class="t" style="left:778px;top:141.11px;font-size:7.2px;color:#555;">inProtein</div>
<div class="t" style="left:816.5px;top:134.04px;font-size:4.8px;font-weight:700;color:#3a2a2a;">modify</div>
<div class="t" style="left:852.5px;top:134.04px;font-size:4.8px;font-weight:700;color:#1a1a1a;">absolute</div>
<div class="in" style="left:816.5px;top:142.1px;width:33.8px;height:17.2px"></div>
<div class="t" style="left:819.7px;top:151.14px;font-size:6.53px;-webkit-text-stroke:0;">1</div>
<div class="in" style="left:852.5px;top:142.1px;width:33.5px;height:17.2px"></div>
<div class="t" style="left:855.7px;top:151.14px;font-size:6.53px;color:#777;-webkit-text-stroke:0;">0</div>
<div class="t" style="left:767.7px;top:173.82px;font-size:8.9px;color:#444;">Squareness</div>
<div class="t" style="left:767.7px;top:189.35px;font-size:6.5px;color:#777;">&gt; 20 = squared</div>
<div class="in" style="left:822.9px;top:177.2px;width:53.5px;height:17.3px"></div>
<div class="t" style="left:826.1px;top:186.29px;font-size:6.53px;color:#555;-webkit-text-stroke:0;">4</div>
<div class="t" style="left:767.7px;top:210.34px;font-size:6.8px;font-weight:700;color:#444;">resolution:</div>
<div class="t" style="left:822.9px;top:207.44px;font-size:6.8px;font-weight:700;color:#1a1a1a;">marks'</div>
<div class="t" style="left:851.7px;top:207.44px;font-size:6.8px;font-weight:700;color:#1a1a1a;">chr.</div>
<div class="t" style="left:767.7px;top:220.95px;font-size:6.5px;color:#777;">&gt; = more vertices</div>
<div class="in" style="left:822.9px;top:216.5px;width:26.7px;height:16.7px"></div>
<div class="t" style="left:826.1px;top:225.29px;font-size:6.53px;color:#555;-webkit-text-stroke:0;">25</div>
<div class="in" style="left:851.7px;top:216.5px;width:26.2px;height:16.7px"></div>
<div class="t" style="left:854.9px;top:225.29px;font-size:6.53px;color:#555;-webkit-text-stroke:0;">50</div>
<div style="left:767.4px;top:242.4px;width:23.3px;height:19.2px;background:#f4f4f4;border:1px solid #e0e0e0;box-sizing:border-box;border-radius:2px"></div>
<div style="left:853.6px;top:242.4px;width:23.4px;height:19.2px;background:#f4f4f4;border:1px solid #e0e0e0;box-sizing:border-box;border-radius:2px"></div>
<svg style="left:774.4px;top:247.1px" width="9" height="9" viewBox="0 0 9 9"><circle cx="4.5" cy="4.5" r="4.3" fill="#111"/><path d="M4.5 2V6.6M2.5 4.6L4.5 6.6L6.5 4.6" fill="none" stroke="#fff" stroke-width="1.2"/></svg>
<svg style="left:860.6px;top:247.1px" width="9" height="9" viewBox="0 0 9 9"><circle cx="4.5" cy="4.5" r="4.3" fill="#111"/><path d="M4.5 7V2.4M2.5 4.4L4.5 2.4L6.5 4.4" fill="none" stroke="#fff" stroke-width="1.2"/></svg>
<div class="t" style="left:803.8px;top:250.92px;font-size:8.6px;color:#444;">Fonts' size</div>
<div class="t" style="left:890.8px;top:98.92px;font-size:8.9px;color:#444;">Plot</div>
<div class="t" style="left:915.1px;top:96.51px;font-size:6.6px;font-weight:700;color:#1a1a1a;">width %</div>
<div class="t" style="left:960.6px;top:96.51px;font-size:6.6px;font-weight:700;color:#1a1a1a;">height ratio</div>
<div class="in" style="left:915.1px;top:104.2px;width:43.2px;height:17.6px"></div>
<div class="t" style="left:918.3px;top:113.17px;font-size:7.31px;color:#777;font-family:'Liberation Serif';-webkit-text-stroke:0;">100</div>
<div class="in" style="left:960.6px;top:104.2px;width:44.4px;height:17.6px"></div>
<div class="t" style="left:963.8px;top:113.17px;font-size:7.31px;color:#777;font-family:'Liberation Serif';-webkit-text-stroke:0;">0.8</div>
<div class="t" style="left:921.2px;top:130.64px;font-size:6.8px;color:#444;">1108 px</div>
<div class="t" style="left:921.2px;top:140.84px;font-size:6.8px;color:#444;">13.85 in</div>
<div class="t" style="left:965.1px;top:130.64px;font-size:6.8px;color:#444;">886.4 px</div>
<div class="t" style="left:965.1px;top:140.84px;font-size:6.8px;color:#444;">11.08 in</div>
<div class="t" style="left:935.4px;top:155.44px;font-size:6.8px;font-weight:700;color:#1a1a1a;">Format:</div>
<div class="t" style="left:890.8px;top:166.74px;font-size:6.8px;font-weight:700;color:#1a1a1a;">Display</div>
<div class="t" style="left:949.8px;top:166.74px;font-size:6.8px;font-weight:700;color:#1a1a1a;">Download</div>
<div class="rd rc" style="left:890.5px;top:176.8px;width:7px;height:7px"></div>
<div class="t" style="left:900.9px;top:180.24px;font-size:6.8px;color:#555;">svg</div>
<div class="rd" style="left:917.5px;top:176.8px;width:7px;height:7px"></div>
<div class="t" style="left:928.6px;top:180.24px;font-size:6.8px;color:#555;">png</div>
<div class="rd rc" style="left:949.5px;top:176.8px;width:7px;height:7px"></div>
<div class="t" style="left:960.1px;top:180.24px;font-size:6.8px;color:#555;">svg</div>
<div class="rd" style="left:977.2px;top:176.8px;width:7px;height:7px"></div>
<div class="t" style="left:987.6px;top:180.24px;font-size:6.8px;color:#555;">png</div>
<div style="left:890.3px;top:190.5px;width:69.2px;height:16.9px;background:#1ab7ea;border-radius:2px"></div>
<svg style="left:898px;top:194.8px" width="7" height="8" viewBox="0 0 7 8"><path d="M3.5 0.5V5M1.3 3L3.5 5.2L5.7 3" fill="none" stroke="#222" stroke-width="1.3"/><rect x="0.3" y="6.2" width="6.4" height="1.4" fill="#222"/></svg>
<div class="t" style="left:906.5px;top:199.21px;font-size:6.6px;font-weight:700;color:#222;">Download plot</div>
<div class="t" style="left:890.9px;top:225.93px;font-size:6.85px;color:#777;">The preset file contains all, use it in</div>
<div class="t" style="left:890.9px;top:236.03px;font-size:6.85px;color:#777;">the 'Examples' page</div>
<div style="left:890.4px;top:243.2px;width:76.8px;height:17.9px;background:#10a757;border-radius:1.2px"></div>
<svg style="left:898px;top:248px" width="7" height="8" viewBox="0 0 7 8"><path d="M3.5 0.5V5M1.3 3L3.5 5.2L5.7 3" fill="none" stroke="#7a2a2a" stroke-width="1.3"/><rect x="0.3" y="6.2" width="6.4" height="1.4" fill="#7a2a2a"/></svg>
<div class="t" style="left:905.7px;top:252.46px;font-size:6.75px;color:#6a3535;">Download Presets</div>
<div class="t" style="left:890.7px;top:282.31px;font-size:6.6px;font-weight:700;color:#1a1a1a;">Zoom (X)</div>
<div style="left:926.3px;top:272.7px;width:20.3px;height:17.9px;background:#f3f3f3;border:1px solid #ececec;box-sizing:border-box;border-radius:2px"></div>
<svg style="left:932.5px;top:278.3px" width="8" height="8" viewBox="0 0 8 8"><circle cx="3.2" cy="3.2" r="2.3" fill="none" stroke="#222" stroke-width="1.2"/><path d="M4.9 4.9L7.3 7.3" stroke="#222" stroke-width="1.5"/><path d="M2 3.2H4.4" stroke="#222" stroke-width="0.8"/></svg>
<div style="left:989px;top:272.7px;width:21px;height:17.9px;background:#f3f3f3;border:1px solid #ececec;box-sizing:border-box;border-radius:2px"></div>
<svg style="left:994.5px;top:278.3px" width="8" height="8" viewBox="0 0 8 8"><circle cx="3.2" cy="3.2" r="2.3" fill="none" stroke="#222" stroke-width="1.2"/><path d="M4.9 4.9L7.3 7.3" stroke="#222" stroke-width="1.5"/><path d="M2 3.2H4.4M3.2 2V4.4" stroke="#222" stroke-width="0.8"/></svg>
<div style="left:951.3px;top:296.4px;width:34.6px;height:5.6px;background:#e8e8e8;border-radius:3px"></div>
<div style="left:951.3px;top:296.4px;width:7.5px;height:5.6px;background:#2a7ad0;border-radius:3px 0 0 3px"></div>
<div style="left:953.3px;top:293px;width:11px;height:11px;background:#dcdcdc;border:0.8px solid #c8c8c8;box-sizing:border-box;border-radius:50%"></div>
<div style="left:956.2px;top:284px;width:5.8px;height:7.8px;background:#2a7ad0;border-radius:1px"></div>
<div class="t" style="left:957.5px;top:288.4px;font-size:5.2px;color:#fff;">1</div>
<div style="left:976.8px;top:284.6px;width:9.1px;height:6.4px;background:#e3e3e3;border-radius:1px"></div>
<div class="t" style="left:978.2px;top:288.54px;font-size:4.8px;color:#999;">10</div>
<div class="t" style="left:890.8px;top:321.12px;font-size:8.9px;color:#444;">Margins</div>
<div class="t" style="left:890.8px;top:337.34px;font-size:6.8px;font-weight:700;color:#1a1a1a;">bottom</div>
<div class="t" style="left:919.5px;top:337.34px;font-size:6.8px;font-weight:700;color:#1a1a1a;">top</div>
<div class="t" style="left:948.7px;top:337.34px;font-size:6.8px;font-weight:700;color:#1a1a1a;">left</div>
<div class="t" style="left:977.7px;top:337.34px;font-size:6.8px;font-weight:700;color:#1a1a1a;">right</div>
<div class="in" style="left:890.8px;top:345.7px;width:26.8px;height:16.8px"></div>
<div class="t" style="left:894px;top:354.54px;font-size:6.53px;color:#777;-webkit-text-stroke:0;">1</div>
<div class="in" style="left:919.5px;top:345.7px;width:27.1px;height:16.8px"></div>
<div class="t" style="left:922.7px;top:354.54px;font-size:6.53px;color:#8a5a3a;-webkit-text-stroke:0;">0</div>
<div class="in" style="left:948.7px;top:345.7px;width:27.1px;height:16.8px"></div>
<div class="t" style="left:951.9px;top:354.54px;font-size:6.53px;color:#777;-webkit-text-stroke:0;">1</div>
<div class="in" style="left:977.7px;top:345.7px;width:27.3px;height:16.8px"></div>
<div class="t" style="left:980.9px;top:354.54px;font-size:6.53px;color:#8a5a3a;-webkit-text-stroke:0;">5</div>
<div class="t" style="left:890.8px;top:378.95px;font-size:6.5px;color:#555;">Move all karyotypes</div>
<div class="t" style="left:890.8px;top:393.64px;font-size:6.8px;font-weight:700;color:#1a1a1a;">horiz.</div>
<div class="t" style="left:947.1px;top:393.64px;font-size:6.8px;font-weight:700;color:#1a1a1a;">vertical</div>
<div class="in" style="left:890.8px;top:402px;width:54.3px;height:16.8px"></div>
<div class="t" style="left:894px;top:410.84px;font-size:6.53px;color:#8a7a5a;-webkit-text-stroke:0;">0</div>
<div class="in" style="left:947.1px;top:402px;width:57.9px;height:16.8px"></div>
<div class="t" style="left:950.3px;top:410.84px;font-size:6.53px;color:#8a7a5a;-webkit-text-stroke:0;">0</div>
<div class="t" style="left:890.3px;top:437.92px;font-size:8.9px;color:#444;">Indices &amp; Info.</div>
<div class="t" style="left:890.3px;top:454.64px;font-size:6.8px;font-weight:700;color:#1a1a1a;">font</div>
<div class="t" style="left:890.3px;top:465.04px;font-size:6.8px;font-weight:700;color:#1a1a1a;">size</div>
<div class="t" style="left:928.8px;top:454.64px;font-size:6.8px;font-weight:700;color:#1a1a1a;">chr. to text</div>
<div class="t" style="left:928.8px;top:465.04px;font-size:6.8px;font-weight:700;color:#1a1a1a;">separation</div>
<div class="cb" style="left:967.5px;top:454px;width:6px;height:6px"></div>
<div class="t" style="left:977.3px;top:457.91px;font-size:4.6px;color:#555;">Add kar.</div>
<div class="t" style="left:977.3px;top:465.31px;font-size:4.6px;color:#555;">ind. 2,3,4</div>
<div class="in" style="left:890.3px;top:472.6px;width:36.5px;height:17.7px"></div>
<div class="t" style="left:893.5px;top:481.89px;font-size:6.53px;color:#555;-webkit-text-stroke:0;">1</div>
<div class="in" style="left:928.8px;top:472.6px;width:35.7px;height:17.7px"></div>
<div class="t" style="left:932px;top:481.89px;font-size:6.53px;color:#555;-webkit-text-stroke:0;">0.9</div>
<div class="t" style="left:890.3px;top:504.44px;font-size:6.8px;font-weight:700;color:#1a1a1a;">Morphology</div>
<div class="t" style="left:947px;top:504.44px;font-size:6.8px;font-weight:700;color:#1a1a1a;">Add AR &amp; CI</div>
<div class="rd" style="left:890.5px;top:514.4px;width:7px;height:7px"></div>
<div class="t" style="left:901px;top:517.84px;font-size:6.8px;color:#555;">Guerra (1986)</div>
<div class="rd" style="left:946.7px;top:514.4px;width:7px;height:7px"></div>
<div class="t" style="left:957.6px;top:517.84px;font-size:6.8px;color:#555;">Chr. Index</div>
<div class="rd" style="left:890.5px;top:527.5px;width:7px;height:7px"></div>
<div class="t" style="left:901px;top:530.94px;font-size:6.8px;color:#555;">Levan (1974)</div>
<div class="rd" style="left:946.7px;top:527.5px;width:7px;height:7px"></div>
<div class="t" style="left:957.6px;top:530.94px;font-size:6.8px;color:#555;">Arm Ratio</div>
<div class="rd" style="left:890.5px;top:540.5px;width:7px;height:7px"></div>
<div class="t" style="left:901px;top:543.94px;font-size:6.8px;color:#555;">both</div>
<div class="rd" style="left:946.7px;top:540.5px;width:7px;height:7px"></div>
<div class="t" style="left:957.6px;top:543.94px;font-size:6.8px;color:#555;">both</div>
<div class="rd rc" style="left:890.5px;top:553.8px;width:7px;height:7px"></div>
<div class="t" style="left:901px;top:557.24px;font-size:6.8px;color:#555;">none</div>
<div class="rd rc" style="left:946.7px;top:553.8px;width:7px;height:7px"></div>
<div class="t" style="left:957.6px;top:557.24px;font-size:6.8px;color:#555;">none</div>
<svg style="left:0;top:0" width="1000" height="564" viewBox="0 0 1000 564" font-family="Liberation Sans, sans-serif"><rect x="375" y="346.7" width="4.6" height="11.2" rx="1.9" fill="#1e90ff"/><rect x="375" y="358.3" width="4.6" height="14.7" rx="1.9" fill="#1e90ff"/><rect x="381.1" y="346.7" width="4.6" height="11.2" rx="1.9" fill="#1e90ff"/><rect x="381.1" y="358.3" width="4.6" height="14.7" rx="1.9" fill="#1e90ff"/><rect x="378.6" y="356.6" width="3.5" height="3" fill="#1e90ff"/><rect x="375.6" y="356.9" width="4" height="2.4" fill="#1e90ff"/><rect x="381.1" y="356.9" width="4" height="2.4" fill="#1e90ff"/><path d="M375 350.8V348.6A1.9 1.9 0 0 1 376.9 346.7H377.7A1.9 1.9 0 0 1 379.6 348.6V350.8Z" fill="#fdb22b"/><path d="M381.1 350.8V348.6A1.9 1.9 0 0 1 383 346.7H383.8A1.9 1.9 0 0 1 385.7 348.6V350.8Z" fill="#fdb22b"/><path d="M375 368V371.1A1.9 1.9 0 0 0 376.9 373H377.7A1.9 1.9 0 0 0 379.6 371.1V368Z" fill="#fdb22b"/><path d="M381.1 368V371.1A1.9 1.9 0 0 0 383 373H383.8A1.9 1.9 0 0 0 385.7 371.1V368Z" fill="#fdb22b"/><rect x="375" y="387.6" width="10.7" height="0.8" fill="#8a8a8a"/><rect x="391.4" y="349.9" width="4.6" height="6.9" rx="1.9" fill="#1e90ff"/><rect x="391.4" y="357.2" width="4.6" height="15.8" rx="1.9" fill="#1e90ff"/><rect x="397.5" y="349.9" width="4.6" height="6.9" rx="1.9" fill="#1e90ff"/><rect x="397.5" y="357.2" width="4.6" height="15.8" rx="1.9" fill="#1e90ff"/><rect x="395" y="355.5" width="3.5" height="3" fill="#1e90ff"/><rect x="392" y="355.8" width="4" height="2.4" fill="#1e90ff"/><rect x="397.5" y="355.8" width="4" height="2.4" fill="#1e90ff"/><circle cx="393.7" cy="352" r="2.5" fill="#fdb22b"/><circle cx="393.7" cy="352" r="1.05" fill="#4cc83a"/><circle cx="399.8" cy="352" r="2.5" fill="#fdb22b"/><circle cx="399.8" cy="352" r="1.05" fill="#4cc83a"/><rect x="391.4" y="387.6" width="10.7" height="0.8" fill="#8a8a8a"/><rect x="407.8" y="347.8" width="4.6" height="10.6" rx="1.9" fill="#1e90ff"/><rect x="407.8" y="358.8" width="4.6" height="12.4" rx="1.9" fill="#1e90ff"/><rect x="413.9" y="347.8" width="4.6" height="10.6" rx="1.9" fill="#1e90ff"/><rect x="413.9" y="358.8" width="4.6" height="12.4" rx="1.9" fill="#1e90ff"/><rect x="411.4" y="357.1" width="3.5" height="3" fill="#1e90ff"/><rect x="408.4" y="357.4" width="4" height="2.4" fill="#1e90ff"/><rect x="413.9" y="357.4" width="4" height="2.4" fill="#1e90ff"/><path d="M407.8 363.8V369.3A1.9 1.9 0 0 0 409.7 371.2H410.5A1.9 1.9 0 0 0 412.4 369.3V363.8Z" fill="#fdb22b"/><path d="M413.9 363.8V369.3A1.9 1.9 0 0 0 415.8 371.2H416.6A1.9 1.9 0 0 0 418.5 369.3V363.8Z" fill="#fdb22b"/><rect x="407.8" y="387.6" width="10.7" height="0.8" fill="#8a8a8a"/><rect x="424.2" y="347.4" width="4.6" height="11" rx="1.9" fill="#1e90ff"/><rect x="424.2" y="358.8" width="4.6" height="16.7" rx="1.9" fill="#1e90ff"/><rect x="430.3" y="347.4" width="4.6" height="11" rx="1.9" fill="#1e90ff"/><rect x="430.3" y="358.8" width="4.6" height="16.7" rx="1.9" fill="#1e90ff"/><rect x="427.8" y="357.1" width="3.5" height="3" fill="#1e90ff"/><rect x="424.8" y="357.4" width="4" height="2.4" fill="#1e90ff"/><rect x="430.3" y="357.4" width="4" height="2.4" fill="#1e90ff"/><path d="M424.2 366.6V373.6A1.9 1.9 0 0 0 426.1 375.5H426.9A1.9 1.9 0 0 0 428.8 373.6V366.6Z" fill="#fdb22b"/><path d="M430.3 366.6V373.6A1.9 1.9 0 0 0 432.2 375.5H433A1.9 1.9 0 0 0 434.9 373.6V366.6Z" fill="#fdb22b"/><rect x="424.2" y="387.6" width="10.7" height="0.8" fill="#8a8a8a"/><rect x="440.6" y="345.5" width="4.6" height="12.3" rx="1.9" fill="#1e90ff"/><rect x="440.6" y="358.2" width="4.6" height="15.8" rx="1.9" fill="#1e90ff"/><rect x="446.7" y="345.5" width="4.6" height="12.3" rx="1.9" fill="#1e90ff"/><rect x="446.7" y="358.2" width="4.6" height="15.8" rx="1.9" fill="#1e90ff"/><rect x="444.2" y="356.5" width="3.5" height="3" fill="#1e90ff"/><rect x="441.2" y="356.8" width="4" height="2.4" fill="#1e90ff"/><rect x="446.7" y="356.8" width="4" height="2.4" fill="#1e90ff"/><path d="M440.6 364.5V372.1A1.9 1.9 0 0 0 442.5 374H443.3A1.9 1.9 0 0 0 445.2 372.1V364.5Z" fill="#fdb22b"/><path d="M446.7 364.5V372.1A1.9 1.9 0 0 0 448.6 374H449.4A1.9 1.9 0 0 0 451.3 372.1V364.5Z" fill="#fdb22b"/><rect x="440.6" y="387.6" width="10.7" height="0.8" fill="#8a8a8a"/><rect x="457" y="345" width="4.6" height="13.3" rx="1.9" fill="#1e90ff"/><rect x="457" y="358.7" width="4.6" height="17.1" rx="1.9" fill="#1e90ff"/><rect x="463.1" y="345" width="4.6" height="13.3" rx="1.9" fill="#1e90ff"/><rect x="463.1" y="358.7" width="4.6" height="17.1" rx="1.9" fill="#1e90ff"/><rect x="460.6" y="357" width="3.5" height="3" fill="#1e90ff"/><rect x="457.6" y="357.3" width="4" height="2.4" fill="#1e90ff"/><rect x="463.1" y="357.3" width="4" height="2.4" fill="#1e90ff"/><path d="M457 368.5V373.9A1.9 1.9 0 0 0 458.9 375.8H459.7A1.9 1.9 0 0 0 461.6 373.9V368.5Z" fill="#fdb22b"/><path d="M463.1 368.5V373.9A1.9 1.9 0 0 0 465 375.8H465.8A1.9 1.9 0 0 0 467.7 373.9V368.5Z" fill="#fdb22b"/><rect x="457" y="387.6" width="10.7" height="0.8" fill="#8a8a8a"/><rect x="473.4" y="352" width="4.6" height="6.3" rx="1.9" fill="#1e90ff"/><rect x="473.4" y="358.7" width="4.6" height="14.1" rx="1.9" fill="#1e90ff"/><rect x="479.5" y="352" width="4.6" height="6.3" rx="1.9" fill="#1e90ff"/><rect x="479.5" y="358.7" width="4.6" height="14.1" rx="1.9" fill="#1e90ff"/><rect x="477" y="357" width="3.5" height="3" fill="#1e90ff"/><rect x="474" y="357.3" width="4" height="2.4" fill="#1e90ff"/><rect x="479.5" y="357.3" width="4" height="2.4" fill="#1e90ff"/><rect x="473.4" y="387.6" width="10.7" height="0.8" fill="#8a8a8a"/><rect x="489.8" y="349.5" width="4.6" height="8.8" rx="1.9" fill="#1e90ff"/><rect x="489.8" y="358.7" width="4.6" height="15.1" rx="1.9" fill="#1e90ff"/><rect x="495.9" y="349.5" width="4.6" height="8.8" rx="1.9" fill="#1e90ff"/><rect x="495.9" y="358.7" width="4.6" height="15.1" rx="1.9" fill="#1e90ff"/><rect x="493.4" y="357" width="3.5" height="3" fill="#1e90ff"/><rect x="490.4" y="357.3" width="4" height="2.4" fill="#1e90ff"/><rect x="495.9" y="357.3" width="4" height="2.4" fill="#1e90ff"/><rect x="489.8" y="387.6" width="10.7" height="0.8" fill="#8a8a8a"/><rect x="506.2" y="344.6" width="4.6" height="13.3" rx="1.9" fill="#1e90ff"/><rect x="506.2" y="358.3" width="4.6" height="18.3" rx="1.9" fill="#1e90ff"/><rect x="512.3" y="344.6" width="4.6" height="13.3" rx="1.9" fill="#1e90ff"/><rect x="512.3" y="358.3" width="4.6" height="18.3" rx="1.9" fill="#1e90ff"/><rect x="509.8" y="356.6" width="3.5" height="3" fill="#1e90ff"/><rect x="506.8" y="356.9" width="4" height="2.4" fill="#1e90ff"/><rect x="512.3" y="356.9" width="4" height="2.4" fill="#1e90ff"/><rect x="506.2" y="387.6" width="10.7" height="0.8" fill="#8a8a8a"/><text x="380.35" y="384.5" font-size="6.4" text-anchor="middle" fill="#4a4a4a">C</text><text x="380.35" y="396.6" font-size="6.4" text-anchor="middle" fill="#3a3a3a">1</text><text x="396.75" y="384.5" font-size="6.4" text-anchor="middle" fill="#4a4a4a">D</text><text x="396.75" y="396.6" font-size="6.4" text-anchor="middle" fill="#3a3a3a">2</text><text x="413.15" y="384.5" font-size="6.4" text-anchor="middle" fill="#4a4a4a">D</text><text x="413.15" y="396.6" font-size="6.4" text-anchor="middle" fill="#3a3a3a">3</text><text x="429.55" y="384.5" font-size="6.4" text-anchor="middle" fill="#4a4a4a">D</text><text x="429.55" y="396.6" font-size="6.4" text-anchor="middle" fill="#3a3a3a">4</text><text x="445.95" y="384.5" font-size="6.4" text-anchor="middle" fill="#4a4a4a">D</text><text x="445.95" y="396.6" font-size="6.4" text-anchor="middle" fill="#3a3a3a">5</text><text x="462.35" y="384.5" font-size="6.4" text-anchor="middle" fill="#4a4a4a">D</text><text x="462.35" y="396.6" font-size="6.4" text-anchor="middle" fill="#3a3a3a">6</text><text x="478.75" y="384.5" font-size="6.4" text-anchor="middle" fill="#4a4a4a">F</text><text x="478.75" y="396.6" font-size="6.4" text-anchor="middle" fill="#3a3a3a">7</text><text x="495.15" y="384.5" font-size="6.4" text-anchor="middle" fill="#4a4a4a">F</text><text x="495.15" y="396.6" font-size="6.4" text-anchor="middle" fill="#3a3a3a">8</text><text x="511.55" y="384.5" font-size="6.4" text-anchor="middle" fill="#4a4a4a">F</text><text x="511.55" y="396.6" font-size="6.4" text-anchor="middle" fill="#3a3a3a">9</text><text x="358" y="384.5" font-size="6.45" fill="#4a4a4a">Type</text><text x="358.6" y="396.6" font-size="6.3" fill="#4a4a4a">Pair</text><text x="522" y="360.5" font-size="7.2" fill="#4a4a4a">da-Costa-Silva et al. (2015)</text><text x="375.2" y="409.7" font-size="7.3" fill="#3a3a3a"><tspan font-style="italic">C. reticulata</tspan> 'Cravo'</text><text x="375.2" y="426.8" font-size="9.1" fill="#3a3a3a">2C + 10D + 6F [2C/45S, 2D/45S]</text><rect x="374.7" y="444" width="1" height="74" fill="#7a7a7a"/><rect x="375.2" y="480.9" width="92.8" height="1" fill="#7a7a7a"/><circle cx="375.2" cy="481.4" r="1.6" fill="#111"/><rect x="477.8" y="466.5" width="4.3" height="14.3" rx="1.9" fill="#1e90ff"/><rect x="477.8" y="481.2" width="4.3" height="20.6" rx="1.9" fill="#1e90ff"/><rect x="483.9" y="466.5" width="4.3" height="14.3" rx="1.9" fill="#1e90ff"/><rect x="483.9" y="481.2" width="4.3" height="20.6" rx="1.9" fill="#1e90ff"/><rect x="481.1" y="479.5" width="3.8" height="3" fill="#1e90ff"/><rect x="478.4" y="479.8" width="3.7" height="2.4" fill="#1e90ff"/><rect x="483.9" y="479.8" width="3.7" height="2.4" fill="#1e90ff"/><circle cx="479.95" cy="478.9" r="2.3" fill="#fdb22b"/><circle cx="479.95" cy="478.9" r="0.97" fill="#4cc83a"/><circle cx="486.05" cy="478.9" r="2.3" fill="#fdb22b"/><circle cx="486.05" cy="478.9" r="0.97" fill="#4cc83a"/><circle cx="479.95" cy="499.5" r="2.3" fill="#fdb22b"/><circle cx="486.05" cy="499.5" r="2.3" fill="#fdb22b"/><rect x="492.2" y="468.8" width="4.3" height="12.6" rx="1.9" fill="#1e90ff"/><rect x="492.2" y="481.8" width="4.3" height="18.9" rx="1.9" fill="#1e90ff"/><rect x="498.3" y="468.8" width="4.3" height="12.6" rx="1.9" fill="#1e90ff"/><rect x="498.3" y="481.8" width="4.3" height="18.9" rx="1.9" fill="#1e90ff"/><rect x="495.5" y="480.1" width="3.8" height="3" fill="#1e90ff"/><rect x="492.8" y="480.4" width="3.7" height="2.4" fill="#1e90ff"/><rect x="498.3" y="480.4" width="3.7" height="2.4" fill="#1e90ff"/><circle cx="494.35" cy="470.7" r="2.3" fill="#fdb22b"/><circle cx="500.45" cy="470.7" r="2.3" fill="#fdb22b"/><circle cx="494.35" cy="498.4" r="2.3" fill="#fdb22b"/><circle cx="500.45" cy="498.4" r="2.3" fill="#fdb22b"/><rect x="506.6" y="469.9" width="4.3" height="11.2" rx="1.9" fill="#1e90ff"/><rect x="506.6" y="481.5" width="4.3" height="16.6" rx="1.9" fill="#1e90ff"/><rect x="512.7" y="469.9" width="4.3" height="11.2" rx="1.9" fill="#1e90ff"/><rect x="512.7" y="481.5" width="4.3" height="16.6" rx="1.9" fill="#1e90ff"/><rect x="509.9" y="479.8" width="3.8" height="3" fill="#1e90ff"/><rect x="507.2" y="480.1" width="3.7" height="2.4" fill="#1e90ff"/><rect x="512.7" y="480.1" width="3.7" height="2.4" fill="#1e90ff"/><circle cx="508.75" cy="496" r="2.3" fill="#fdb22b"/><circle cx="514.85" cy="496" r="2.3" fill="#fdb22b"/><rect x="521" y="470" width="4.3" height="10.6" rx="1.9" fill="#1e90ff"/><rect x="521" y="481" width="4.3" height="17.2" rx="1.9" fill="#1e90ff"/><rect x="527.1" y="470" width="4.3" height="10.6" rx="1.9" fill="#1e90ff"/><rect x="527.1" y="481" width="4.3" height="17.2" rx="1.9" fill="#1e90ff"/><rect x="524.3" y="479.3" width="3.8" height="3" fill="#1e90ff"/><rect x="521.6" y="479.6" width="3.7" height="2.4" fill="#1e90ff"/><rect x="527.1" y="479.6" width="3.7" height="2.4" fill="#1e90ff"/><circle cx="523.15" cy="496.1" r="2.3" fill="#fdb22b"/><circle cx="529.25" cy="496.1" r="2.3" fill="#fdb22b"/><rect x="535.4" y="468" width="4.3" height="12.6" rx="1.9" fill="#1e90ff"/><rect x="535.4" y="481" width="4.3" height="18.7" rx="1.9" fill="#1e90ff"/><rect x="541.5" y="468" width="4.3" height="12.6" rx="1.9" fill="#1e90ff"/><rect x="541.5" y="481" width="4.3" height="18.7" rx="1.9" fill="#1e90ff"/><rect x="538.7" y="479.3" width="3.8" height="3" fill="#1e90ff"/><rect x="536" y="479.6" width="3.7" height="2.4" fill="#1e90ff"/><rect x="541.5" y="479.6" width="3.7" height="2.4" fill="#1e90ff"/><circle cx="537.55" cy="497.3" r="2.3" fill="#fdb22b"/><circle cx="537.55" cy="497.3" r="0.97" fill="#4cc83a"/><circle cx="543.65" cy="497.3" r="2.3" fill="#fdb22b"/><circle cx="543.65" cy="497.3" r="0.97" fill="#4cc83a"/><rect x="549.8" y="468" width="4.3" height="12.6" rx="1.9" fill="#1e90ff"/><rect x="549.8" y="481" width="4.3" height="19.6" rx="1.9" fill="#1e90ff"/><rect x="555.9" y="468" width="4.3" height="12.6" rx="1.9" fill="#1e90ff"/><rect x="555.9" y="481" width="4.3" height="19.6" rx="1.9" fill="#1e90ff"/><rect x="553.1" y="479.3" width="3.8" height="3" fill="#1e90ff"/><rect x="550.4" y="479.6" width="3.7" height="2.4" fill="#1e90ff"/><rect x="555.9" y="479.6" width="3.7" height="2.4" fill="#1e90ff"/><path d="M549.8 496.3V498.7A1.9 1.9 0 0 0 551.7 500.6H552.2A1.9 1.9 0 0 0 554.1 498.7V496.3Z" fill="#fdb22b"/><path d="M555.9 496.3V498.7A1.9 1.9 0 0 0 557.8 500.6H558.3A1.9 1.9 0 0 0 560.2 498.7V496.3Z" fill="#fdb22b"/><rect x="564.2" y="467.6" width="4.3" height="13.3" rx="1.9" fill="#1e90ff"/><rect x="564.2" y="481.3" width="4.3" height="19.4" rx="1.9" fill="#1e90ff"/><rect x="570.3" y="467.6" width="4.3" height="13.3" rx="1.9" fill="#1e90ff"/><rect x="570.3" y="481.3" width="4.3" height="19.4" rx="1.9" fill="#1e90ff"/><rect x="567.5" y="479.6" width="3.8" height="3" fill="#1e90ff"/><rect x="564.8" y="479.9" width="3.7" height="2.4" fill="#1e90ff"/><rect x="570.3" y="479.9" width="3.7" height="2.4" fill="#1e90ff"/><path d="M564.2 496.3V498.8A1.9 1.9 0 0 0 566.1 500.7H566.6A1.9 1.9 0 0 0 568.5 498.8V496.3Z" fill="#fdb22b"/><path d="M570.3 496.3V498.8A1.9 1.9 0 0 0 572.2 500.7H572.7A1.9 1.9 0 0 0 574.6 498.8V496.3Z" fill="#fdb22b"/><rect x="578.6" y="467.2" width="4.3" height="13.7" rx="1.9" fill="#1e90ff"/><rect x="578.6" y="481.3" width="4.3" height="19.4" rx="1.9" fill="#1e90ff"/><rect x="584.7" y="467.2" width="4.3" height="13.7" rx="1.9" fill="#1e90ff"/><rect x="584.7" y="481.3" width="4.3" height="19.4" rx="1.9" fill="#1e90ff"/><rect x="581.9" y="479.6" width="3.8" height="3" fill="#1e90ff"/><rect x="579.2" y="479.9" width="3.7" height="2.4" fill="#1e90ff"/><rect x="584.7" y="479.9" width="3.7" height="2.4" fill="#1e90ff"/><path d="M578.6 496.3V498.8A1.9 1.9 0 0 0 580.5 500.7H581A1.9 1.9 0 0 0 582.9 498.8V496.3Z" fill="#fdb22b"/><path d="M584.7 496.3V498.8A1.9 1.9 0 0 0 586.6 500.7H587.1A1.9 1.9 0 0 0 589 498.8V496.3Z" fill="#fdb22b"/><rect x="593" y="467.6" width="4.3" height="13.3" rx="1.9" fill="#1e90ff"/><rect x="593" y="481.3" width="4.3" height="19" rx="1.9" fill="#1e90ff"/><rect x="599.1" y="467.6" width="4.3" height="13.3" rx="1.9" fill="#1e90ff"/><rect x="599.1" y="481.3" width="4.3" height="19" rx="1.9" fill="#1e90ff"/><rect x="596.3" y="479.6" width="3.8" height="3" fill="#1e90ff"/><rect x="593.6" y="479.9" width="3.7" height="2.4" fill="#1e90ff"/><rect x="599.1" y="479.9" width="3.7" height="2.4" fill="#1e90ff"/><path d="M593 496V498.4A1.9 1.9 0 0 0 594.9 500.3H595.4A1.9 1.9 0 0 0 597.3 498.4V496Z" fill="#fdb22b"/><path d="M599.1 496V498.4A1.9 1.9 0 0 0 601 500.3H601.5A1.9 1.9 0 0 0 603.4 498.4V496Z" fill="#fdb22b"/><rect x="607.4" y="467.2" width="4.3" height="13.7" rx="1.9" fill="#1e90ff"/><rect x="607.4" y="481.3" width="4.3" height="20" rx="1.9" fill="#1e90ff"/><rect x="613.5" y="467.2" width="4.3" height="13.7" rx="1.9" fill="#1e90ff"/><rect x="613.5" y="481.3" width="4.3" height="20" rx="1.9" fill="#1e90ff"/><rect x="610.7" y="479.6" width="3.8" height="3" fill="#1e90ff"/><rect x="608" y="479.9" width="3.7" height="2.4" fill="#1e90ff"/><rect x="613.5" y="479.9" width="3.7" height="2.4" fill="#1e90ff"/><circle cx="609.55" cy="498.9" r="2.3" fill="#fdb22b"/><circle cx="615.65" cy="498.9" r="2.3" fill="#fdb22b"/><rect x="621.8" y="467.2" width="4.3" height="13.7" rx="1.9" fill="#1e90ff"/><rect x="621.8" y="481.3" width="4.3" height="20" rx="1.9" fill="#1e90ff"/><rect x="627.9" y="467.2" width="4.3" height="13.7" rx="1.9" fill="#1e90ff"/><rect x="627.9" y="481.3" width="4.3" height="20" rx="1.9" fill="#1e90ff"/><rect x="625.1" y="479.6" width="3.8" height="3" fill="#1e90ff"/><rect x="622.4" y="479.9" width="3.7" height="2.4" fill="#1e90ff"/><rect x="627.9" y="479.9" width="3.7" height="2.4" fill="#1e90ff"/><circle cx="623.95" cy="498.9" r="2.3" fill="#fdb22b"/><circle cx="630.05" cy="498.9" r="2.3" fill="#fdb22b"/><rect x="636.2" y="469.9" width="4.3" height="12.4" rx="1.9" fill="#1e90ff"/><rect x="636.2" y="482.7" width="4.3" height="14.4" rx="1.9" fill="#1e90ff"/><rect x="642.3" y="469.9" width="4.3" height="12.4" rx="1.9" fill="#1e90ff"/><rect x="642.3" y="482.7" width="4.3" height="14.4" rx="1.9" fill="#1e90ff"/><rect x="639.5" y="481" width="3.8" height="3" fill="#1e90ff"/><rect x="636.8" y="481.3" width="3.7" height="2.4" fill="#1e90ff"/><rect x="642.3" y="481.3" width="3.7" height="2.4" fill="#1e90ff"/><rect x="650.6" y="469.9" width="4.3" height="12.4" rx="1.9" fill="#1e90ff"/><rect x="650.6" y="482.7" width="4.3" height="14.4" rx="1.9" fill="#1e90ff"/><rect x="656.7" y="469.9" width="4.3" height="12.4" rx="1.9" fill="#1e90ff"/><rect x="656.7" y="482.7" width="4.3" height="14.4" rx="1.9" fill="#1e90ff"/><rect x="653.9" y="481" width="3.8" height="3" fill="#1e90ff"/><rect x="651.2" y="481.3" width="3.7" height="2.4" fill="#1e90ff"/><rect x="656.7" y="481.3" width="3.7" height="2.4" fill="#1e90ff"/><rect x="665" y="468.9" width="4.3" height="13.4" rx="1.9" fill="#1e90ff"/><rect x="665" y="482.7" width="4.3" height="16.9" rx="1.9" fill="#1e90ff"/><rect x="671.1" y="468.9" width="4.3" height="13.4" rx="1.9" fill="#1e90ff"/><rect x="671.1" y="482.7" width="4.3" height="16.9" rx="1.9" fill="#1e90ff"/><rect x="668.3" y="481" width="3.8" height="3" fill="#1e90ff"/><rect x="665.6" y="481.3" width="3.7" height="2.4" fill="#1e90ff"/><rect x="671.1" y="481.3" width="3.7" height="2.4" fill="#1e90ff"/><rect x="679.4" y="468.9" width="4.3" height="13.4" rx="1.9" fill="#1e90ff"/><rect x="679.4" y="482.7" width="4.3" height="16.9" rx="1.9" fill="#1e90ff"/><rect x="685.5" y="468.9" width="4.3" height="13.4" rx="1.9" fill="#1e90ff"/><rect x="685.5" y="482.7" width="4.3" height="16.9" rx="1.9" fill="#1e90ff"/><rect x="682.7" y="481" width="3.8" height="3" fill="#1e90ff"/><rect x="680" y="481.3" width="3.7" height="2.4" fill="#1e90ff"/><rect x="685.5" y="481.3" width="3.7" height="2.4" fill="#1e90ff"/><rect x="693.8" y="468.9" width="4.3" height="13.4" rx="1.9" fill="#1e90ff"/><rect x="693.8" y="482.7" width="4.3" height="16.9" rx="1.9" fill="#1e90ff"/><rect x="699.9" y="468.9" width="4.3" height="13.4" rx="1.9" fill="#1e90ff"/><rect x="699.9" y="482.7" width="4.3" height="16.9" rx="1.9" fill="#1e90ff"/><rect x="697.1" y="481" width="3.8" height="3" fill="#1e90ff"/><rect x="694.4" y="481.3" width="3.7" height="2.4" fill="#1e90ff"/><rect x="699.9" y="481.3" width="3.7" height="2.4" fill="#1e90ff"/><rect x="708.2" y="465.9" width="4.3" height="16.4" rx="1.9" fill="#1e90ff"/><rect x="708.2" y="482.7" width="4.3" height="20" rx="1.9" fill="#1e90ff"/><rect x="714.3" y="465.9" width="4.3" height="16.4" rx="1.9" fill="#1e90ff"/><rect x="714.3" y="482.7" width="4.3" height="20" rx="1.9" fill="#1e90ff"/><rect x="711.5" y="481" width="3.8" height="3" fill="#1e90ff"/><rect x="708.8" y="481.3" width="3.7" height="2.4" fill="#1e90ff"/><rect x="714.3" y="481.3" width="3.7" height="2.4" fill="#1e90ff"/><path d="M708.2 500V500.8A1.9 1.9 0 0 0 710.1 502.7H710.6A1.9 1.9 0 0 0 712.5 500.8V500Z" fill="#fdb22b"/><path d="M714.3 500V500.8A1.9 1.9 0 0 0 716.2 502.7H716.7A1.9 1.9 0 0 0 718.6 500.8V500Z" fill="#fdb22b"/><rect x="722.6" y="465.9" width="4.3" height="16.4" rx="1.9" fill="#1e90ff"/><rect x="722.6" y="482.7" width="4.3" height="20" rx="1.9" fill="#1e90ff"/><rect x="728.7" y="465.9" width="4.3" height="16.4" rx="1.9" fill="#1e90ff"/><rect x="728.7" y="482.7" width="4.3" height="20" rx="1.9" fill="#1e90ff"/><rect x="725.9" y="481" width="3.8" height="3" fill="#1e90ff"/><rect x="723.2" y="481.3" width="3.7" height="2.4" fill="#1e90ff"/><rect x="728.7" y="481.3" width="3.7" height="2.4" fill="#1e90ff"/><text x="483" y="461.7" font-size="7.1" text-anchor="middle" fill="#3a3a3a">1</text><text x="483" y="511.3" font-size="6.4" text-anchor="middle" fill="#555">B</text><text x="497.4" y="461.7" font-size="7.1" text-anchor="middle" fill="#3a3a3a">2</text><text x="497.4" y="511.3" font-size="6.4" text-anchor="middle" fill="#555">C</text><text x="511.8" y="461.7" font-size="7.1" text-anchor="middle" fill="#3a3a3a">3</text><text x="511.8" y="511.3" font-size="6.4" text-anchor="middle" fill="#555">D</text><text x="526.2" y="461.7" font-size="7.1" text-anchor="middle" fill="#3a3a3a">4</text><text x="526.2" y="511.3" font-size="6.4" text-anchor="middle" fill="#555">D</text><text x="540.6" y="461.7" font-size="7.1" text-anchor="middle" fill="#3a3a3a">5</text><text x="540.6" y="511.3" font-size="6.4" text-anchor="middle" fill="#555">D</text><text x="555" y="461.7" font-size="7.1" text-anchor="middle" fill="#3a3a3a">6</text><text x="555" y="511.3" font-size="6.4" text-anchor="middle" fill="#555">D</text><text x="569.4" y="461.7" font-size="7.1" text-anchor="middle" fill="#3a3a3a">7</text><text x="569.4" y="511.3" font-size="6.4" text-anchor="middle" fill="#555">D</text><text x="583.8" y="461.7" font-size="7.1" text-anchor="middle" fill="#3a3a3a">8</text><text x="583.8" y="511.3" font-size="6.4" text-anchor="middle" fill="#555">D</text><text x="598.2" y="461.7" font-size="7.1" text-anchor="middle" fill="#3a3a3a">9</text><text x="598.2" y="511.3" font-size="6.4" text-anchor="middle" fill="#555">D</text><text x="612.6" y="461.7" font-size="7.1" text-anchor="middle" fill="#3a3a3a">10</text><text x="612.6" y="511.3" font-size="6.4" text-anchor="middle" fill="#555">D</text><text x="627" y="461.7" font-size="7.1" text-anchor="middle" fill="#3a3a3a">11</text><text x="627" y="511.3" font-size="6.4" text-anchor="middle" fill="#555">D</text><text x="641.4" y="461.7" font-size="7.1" text-anchor="middle" fill="#3a3a3a">12</text><text x="641.4" y="511.3" font-size="6.4" text-anchor="middle" fill="#555">F</text><text x="655.8" y="461.7" font-size="7.1" text-anchor="middle" fill="#3a3a3a">13</text><text x="655.8" y="511.3" font-size="6.4" text-anchor="middle" fill="#555">F</text><text x="670.2" y="461.7" font-size="7.1" text-anchor="middle" fill="#3a3a3a">14</text><text x="670.2" y="511.3" font-size="6.4" text-anchor="middle" fill="#555">F</text><text x="684.6" y="461.7" font-size="7.1" text-anchor="middle" fill="#3a3a3a">15</text><text x="684.6" y="511.3" font-size="6.4" text-anchor="middle" fill="#555">F</text><text x="699" y="461.7" font-size="7.1" text-anchor="middle" fill="#3a3a3a">16</text><text x="699" y="511.3" font-size="6.4" text-anchor="middle" fill="#555">F</text><text x="713.4" y="461.7" font-size="7.1" text-anchor="middle" fill="#3a3a3a">17</text><text x="727.8" y="461.7" font-size="7.1" text-anchor="middle" fill="#3a3a3a">18</text><text x="709.8" y="511.1" font-size="7" fill="#111">F</text><text x="713.3" y="513.6" font-size="4.2" fill="#666">L</text><text x="713.5" y="507.4" font-size="4.4" fill="#555">+</text><text x="724.2" y="511.1" font-size="7" fill="#555">F</text><text x="727.7" y="513.6" font-size="4.2" fill="#666">L</text><text x="727.9" y="507.4" font-size="4.4" fill="#555">0</text><text x="461" y="461.6" font-size="7.1" fill="#4a4a4a">Chr.</text><text x="460" y="511.2" font-size="6.5" fill="#4a4a4a">Type</text><text x="737.7" y="483.5" font-size="7.1" fill="#4a4a4a">Carvalho et al. (2005)</text><text x="478" y="523.4" font-size="7.1" font-style="italic" fill="#3a3a3a">C. limon</text><text x="478.4" y="541.8" font-size="9.1" fill="#3a3a3a">1B + 1C + 9D + 5F + 1F<tspan font-size="5.5" dy="-3.8">0</tspan><tspan font-size="5" dx="-3.2" dy="6.2">L</tspan><tspan dy="-2.4"> + 1F</tspan><tspan font-size="5.5" dy="-3.8">+</tspan><tspan font-size="5" dx="-3.4" dy="6.2">L</tspan><tspan dy="-2.4"> [1B/45S, 1D/45S]</tspan></text></svg>
</body></html>
